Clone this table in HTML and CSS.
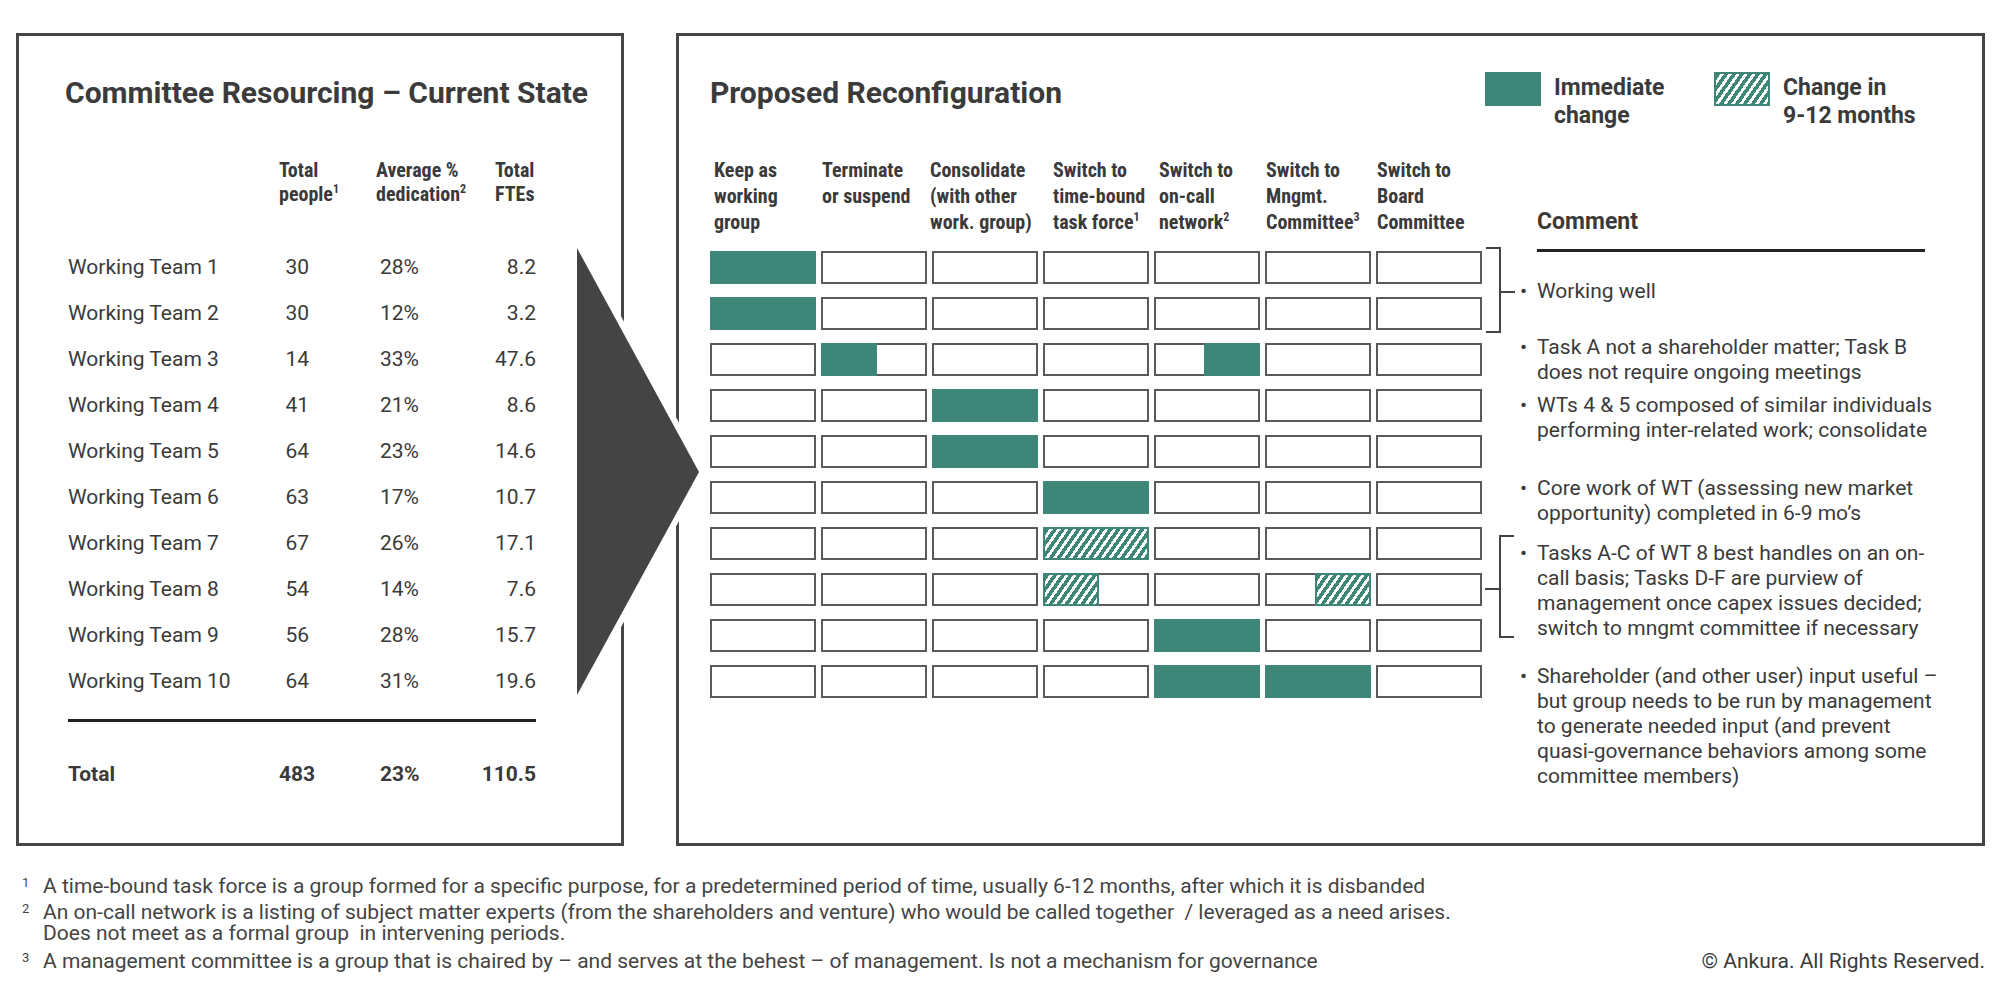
FILE: index.html
```html
<!DOCTYPE html>
<html lang="en">
<head>
<meta charset="utf-8">
<title>Committee Resourcing</title>
<link rel="stylesheet" href="styles.css">
</head>
<body>
<div class="page">
  <div class="panels">
    <section class="panel panel-left">
      <h1 class="title title-left">Committee Resourcing – Current State</h1>
      <div class="tbl-head">
        <div></div>
        <div>Total<br>people<sup>1</sup></div>
        <div>Average %<br>dedication<sup>2</sup></div>
        <div>Total<br>FTEs</div>
      </div>
      <div class="tbl-body">
        <div class="tr"><span>Working Team 1</span><span class="td-num">30</span><span class="td-pct">28%</span><span class="td-fte">8.2</span></div>
        <div class="tr"><span>Working Team 2</span><span class="td-num">30</span><span class="td-pct">12%</span><span class="td-fte">3.2</span></div>
        <div class="tr"><span>Working Team 3</span><span class="td-num">14</span><span class="td-pct">33%</span><span class="td-fte">47.6</span></div>
        <div class="tr"><span>Working Team 4</span><span class="td-num">41</span><span class="td-pct">21%</span><span class="td-fte">8.6</span></div>
        <div class="tr"><span>Working Team 5</span><span class="td-num">64</span><span class="td-pct">23%</span><span class="td-fte">14.6</span></div>
        <div class="tr"><span>Working Team 6</span><span class="td-num">63</span><span class="td-pct">17%</span><span class="td-fte">10.7</span></div>
        <div class="tr"><span>Working Team 7</span><span class="td-num">67</span><span class="td-pct">26%</span><span class="td-fte">17.1</span></div>
        <div class="tr"><span>Working Team 8</span><span class="td-num">54</span><span class="td-pct">14%</span><span class="td-fte">7.6</span></div>
        <div class="tr"><span>Working Team 9</span><span class="td-num">56</span><span class="td-pct">28%</span><span class="td-fte">15.7</span></div>
        <div class="tr"><span>Working Team 10</span><span class="td-num">64</span><span class="td-pct">31%</span><span class="td-fte">19.6</span></div>
      </div>
      <div class="tbl-rule"></div>
      <div class="tr tr-total"><span>Total</span><span class="td-num">483</span><span class="td-pct">23%</span><span class="td-fte">110.5</span></div>
    </section>

    <section class="panel panel-right">
      <div class="rc-top">
        <h1 class="title rc-title">Proposed Reconfiguration</h1>
        <div class="legend">
          <div class="legend-item legend-item-1"><span class="swatch swatch-solid"></span><span class="legend-text">Immediate<br>change</span></div>
          <div class="legend-item"><span class="swatch swatch-hatch"></span><span class="legend-text">Change in<br>9-12 months</span></div>
        </div>
      </div>
      <div class="rc-body">
        <div class="matrix">
          <div class="col-heads">
            <div>Keep as<br>working<br>group</div>
            <div>Terminate<br>or suspend</div>
            <div>Consolidate<br>(with other<br>work. group)</div>
            <div>Switch to<br>time-bound<br>task force<sup>1</sup></div>
            <div>Switch to<br>on-call<br>network<sup>2</sup></div>
            <div>Switch to<br>Mngmt.<br>Committee<sup>3</sup></div>
            <div>Switch to<br>Board<br>Committee</div>
          </div>
          <div class="cells">
            <div class="cell full"></div><div class="cell"></div><div class="cell"></div><div class="cell"></div><div class="cell"></div><div class="cell"></div><div class="cell"></div>
            <div class="cell full"></div><div class="cell"></div><div class="cell"></div><div class="cell"></div><div class="cell"></div><div class="cell"></div><div class="cell"></div>
            <div class="cell"></div><div class="cell"><span class="part"></span></div><div class="cell"></div><div class="cell"></div><div class="cell"><span class="part part-right"></span></div><div class="cell"></div><div class="cell"></div>
            <div class="cell"></div><div class="cell"></div><div class="cell full"></div><div class="cell"></div><div class="cell"></div><div class="cell"></div><div class="cell"></div>
            <div class="cell"></div><div class="cell"></div><div class="cell full"></div><div class="cell"></div><div class="cell"></div><div class="cell"></div><div class="cell"></div>
            <div class="cell"></div><div class="cell"></div><div class="cell"></div><div class="cell full"></div><div class="cell"></div><div class="cell"></div><div class="cell"></div>
            <div class="cell"></div><div class="cell"></div><div class="cell"></div><div class="cell hatch"></div><div class="cell"></div><div class="cell"></div><div class="cell"></div>
            <div class="cell"></div><div class="cell"></div><div class="cell"></div><div class="cell"><span class="part part-hatch"></span></div><div class="cell"></div><div class="cell"><span class="part part-hatch part-right"></span></div><div class="cell"></div>
            <div class="cell"></div><div class="cell"></div><div class="cell"></div><div class="cell"></div><div class="cell full"></div><div class="cell"></div><div class="cell"></div>
            <div class="cell"></div><div class="cell"></div><div class="cell"></div><div class="cell"></div><div class="cell full"></div><div class="cell full"></div><div class="cell"></div>
          </div>
        </div>
        <svg class="brackets" width="55" height="560" viewBox="0 0 55 560">
          <path d="M4 91 H18 V175 H4 M18 135 H33" fill="none" stroke="#444" stroke-width="2"/>
          <path d="M32 379 H18 V480 H32 M18 432 H3" fill="none" stroke="#444" stroke-width="2"/>
        </svg>
        <div class="comments">
          <h2 class="comment-head">Comment</h2>
          <ul class="comment-list">
            <li><span class="bullet">•</span><span>Working well</span></li>
            <li><span class="bullet">•</span><span>Task A not a shareholder matter; Task B<br>does not require ongoing meetings</span></li>
            <li><span class="bullet">•</span><span>WTs 4 &amp; 5 composed of similar individuals<br>performing inter-related work; consolidate</span></li>
            <li><span class="bullet">•</span><span>Core work of WT (assessing new market<br>opportunity) completed in 6-9 mo’s</span></li>
            <li><span class="bullet">•</span><span>Tasks A-C of WT 8 best handles on an on-<br>call basis; Tasks D-F are purview of<br>management once capex issues decided;<br>switch to mngmt committee if necessary</span></li>
            <li><span class="bullet">•</span><span>Shareholder (and other user) input useful –<br>but group needs to be run by management<br>to generate needed input (and prevent<br>quasi-governance behaviors among some<br>committee members)</span></li>
          </ul>
        </div>
      </div>
    </section>
  </div>

  <svg class="arrow" width="150" height="470" viewBox="0 0 150 470">
    <polygon points="7,10 129,234 7,457" fill="#444" stroke="#fff" stroke-width="12" paint-order="stroke"/>
  </svg>

  <div class="footnotes">
    <div class="fn"><span class="fn-num">1</span><span>A time-bound task force is a group formed for a specific purpose, for a predetermined period of time, usually 6-12 months, after which it is disbanded</span></div>
    <div class="fn fn-2"><span class="fn-num">2</span><span>An on-call network is a listing of subject matter experts (from the shareholders and venture) who would be called together &nbsp;/ leveraged as a need arises.<br>Does not meet as a formal group &nbsp;in intervening periods.</span></div>
    <div class="fn fn-3"><span class="fn-num">3</span><span>A management committee is a group that is chaired by – and serves at the behest – of management. Is not a mechanism for governance</span><span class="copyright">© Ankura. All Rights Reserved.</span></div>
  </div>
</div>
</body>
</html>
```

FILE: styles.css
```css
html, body {
  margin: 0;
  padding: 0;
  background: #fff;
}

body {
  font-family: Roboto, "Noto Sans", "Liberation Sans", sans-serif;
  color: #3a3a3a;
}

.page {
  position: relative;
  width: 2000px;
  height: 996px;
  box-sizing: border-box;
  padding: 33px 15px 0 16px;
}

.panels {
  display: flex;
  gap: 52px;
  height: 813px;
}

.panel {
  box-sizing: border-box;
  height: 100%;
  border: 3px solid #454545;
}

.panel-left {
  width: 608px;
  padding: 39px 0 0 49px;
}

.panel-right {
  width: 1309px;
  padding: 39px 0 0 31px;
}

.title {
  margin: 0;
  font-family: Roboto, sans-serif;
  font-weight: 700;
  font-size: 30px;
  line-height: 36px;
  color: #3b3b3b;
  white-space: nowrap;
}

.title-left {
  margin-left: -3px;
}

sup {
  font-size: 12px;
  line-height: 0;
  vertical-align: 8px;
}

/* left table */
.tbl-head {
  display: grid;
  grid-template-columns: 211px 97px 119px 60px;
  margin-top: 47px;
  font-family: "Roboto Condensed", Roboto, sans-serif;
  font-stretch: semi-condensed;
  font-weight: 700;
  font-size: 20px;
  line-height: 24px;
  white-space: nowrap;
  color: #3a3a3a;
}

.tbl-body {
  margin-top: 38px;
}

.tr {
  display: grid;
  grid-template-columns: 211px 97px 100px 60px;
  height: 46px;
  align-items: center;
  font-size: 21px;
  white-space: nowrap;
}

.td-num {
  text-align: right;
  padding-right: 67px;
}

.td-pct {
  padding-left: 4px;
}

.td-fte {
  text-align: right;
}

.tbl-rule {
  width: 468px;
  margin-top: 15px;
  border-top: 3px solid #222;
}

.tr-total {
  margin-top: 29px;
  font-weight: 700;
}

/* right panel */
.rc-top {
  display: flex;
  align-items: flex-start;
  height: 82px;
}

.rc-title {
  flex: none;
  width: 775px;
}

.legend {
  display: flex;
  margin-top: -3px;
}

.legend-item {
  display: flex;
  align-items: flex-start;
  gap: 13px;
}

.legend-item-1 {
  width: 229px;
}

.swatch {
  flex: none;
  display: block;
  width: 56px;
  height: 34px;
  box-sizing: border-box;
  border: 2px solid #3e8677;
}

.swatch-solid {
  background: #3e8677;
}

.swatch-hatch,
.cell.hatch,
.part-hatch {
  background: repeating-linear-gradient(125deg, #3e8677 0 3.6px, #fff 3.6px 6.5px);
}

.legend-text {
  margin-top: 2px;
  font-weight: 700;
  font-size: 23px;
  line-height: 28px;
  color: #3a3a3a;
  white-space: nowrap;
}

.rc-body {
  display: flex;
  align-items: flex-start;
}

.matrix {
  flex: none;
  width: 772px;
}

.col-heads {
  display: grid;
  grid-template-columns: repeat(7, 106px);
  column-gap: 5px;
  height: 94px;
  font-family: "Roboto Condensed", Roboto, sans-serif;
  font-stretch: semi-condensed;
  font-weight: 700;
  font-size: 20px;
  line-height: 26px;
  white-space: nowrap;
  color: #3a3a3a;
}

.col-heads > div {
  padding-left: 1px;
}

.col-heads > div:nth-child(1) {
  padding-left: 4px;
}

.col-heads > div:nth-child(3) {
  padding-left: 0;
  margin-left: -2px;
}

.col-heads > div:nth-child(4) {
  padding-left: 10px;
}

.col-heads > div:nth-child(5) {
  padding-left: 5px;
}

.cells {
  display: grid;
  grid-template-columns: repeat(7, 106px);
  grid-auto-rows: 33px;
  gap: 13px 5px;
}

.cell {
  box-sizing: border-box;
  display: flex;
  border: 2px solid #5a5a5a;
  background: #fff;
}

.cell.full {
  background: #3e8677;
  border-color: #3e8677;
}

.cell.hatch {
  border-color: #3e8677;
}

.part {
  flex: none;
  display: block;
  width: 56px;
  margin: -2px;
  box-sizing: border-box;
  border: 2px solid #3e8677;
  background: #3e8677;
}

.part-right {
  margin-left: auto;
}

.part.part-hatch {
  background: repeating-linear-gradient(125deg, #3e8677 0 3.6px, #fff 3.6px 6.5px);
}

.brackets {
  flex: none;
  display: block;
  overflow: visible;
}

.comments {
  flex: none;
  width: 388px;
}

.comment-head {
  margin: 51px 0 0;
  padding-bottom: 13px;
  border-bottom: 3px solid #222;
  font-weight: 700;
  font-size: 23px;
  line-height: 28px;
  color: #3a3a3a;
}

.comment-list {
  list-style: none;
  margin: 27px 0 0;
  padding: 0;
  font-size: 21px;
  line-height: 25px;
  white-space: nowrap;
  color: #3a3a3a;
}

.comment-list li {
  display: flex;
}

.bullet {
  flex: none;
  width: 17px;
  margin-left: -17px;
}

.comment-list li:nth-child(2) { margin-top: 31px; }
.comment-list li:nth-child(3) { margin-top: 8px; }
.comment-list li:nth-child(4) { margin-top: 33px; }
.comment-list li:nth-child(5) { margin-top: 15px; }
.comment-list li:nth-child(6) { margin-top: 23px; }

/* arrow between panels */
.arrow {
  position: absolute;
  left: 570px;
  top: 238px;
  overflow: visible;
}

/* footnotes */
.footnotes {
  margin-top: 30px;
  font-size: 21px;
  line-height: 21px;
  color: #444;
}

.fn {
  display: flex;
  white-space: nowrap;
}

.fn-num {
  flex: none;
  width: 21px;
  margin-left: 6px;
  font-size: 13px;
  line-height: 14px;
}

.fn-2 {
  margin-top: 5px;
}

.fn-3 {
  margin-top: 7px;
}

.copyright {
  margin-left: auto;
  font-size: 21px;
  color: #3a3a3a;
}
```
